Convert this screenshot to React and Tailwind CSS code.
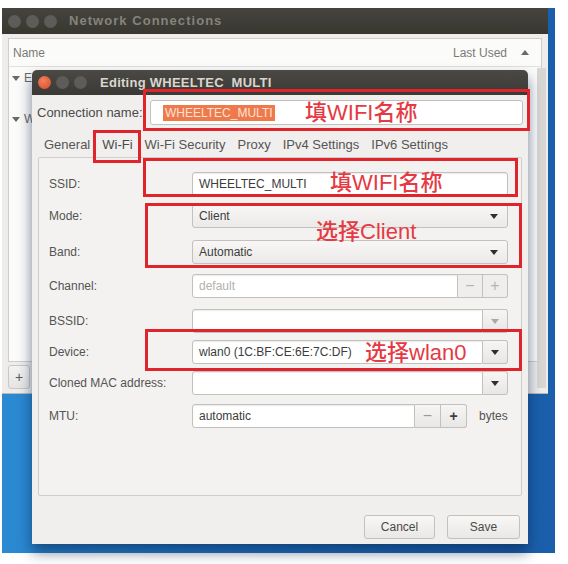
const TriDown = ({ className = "" }) => (
  <svg width="8" height="5" viewBox="0 0 8 5" className={className}>
    <path d="M0 0h8L4 5z" fill="currentColor" />
  </svg>
);

const Entry = ({ children, className = "", disabled }) => (
  <div
    className={`h-full flex items-center px-[6px] border border-[#c2c1bd] bg-white shadow-[inset_0_1px_1px_rgba(0,0,0,0.08)] text-[12px] ${
      disabled ? "text-[#b2b0ab] bg-[#f4f3f2]" : "text-[#3c3c3c]"
    } ${className}`}
  >
    {children}
  </div>
);

const SideButton = ({ children, className = "" }) => (
  <div
    className={`h-full w-[25px] flex items-center justify-center border border-[#c2c1bd] bg-gradient-to-b from-[#f6f5f4] to-[#e8e7e5] text-[#3c3c3c] ${className}`}
  >
    {children}
  </div>
);

const Combo = ({ children }) => (
  <div className="h-full flex-1 flex items-center justify-between px-[6px] pr-[9px] border border-[#c2c1bd] rounded-[3px] bg-gradient-to-b from-[#f8f7f6] to-[#ebeae8] text-[12px] text-[#3c3c3c]">
    <span>{children}</span>
    <TriDown className="text-[#2e2e2e]" />
  </div>
);

const ComboEntry = ({ children, faint }) => (
  <div className="h-full flex-1 flex">
    <Entry className="flex-1 rounded-l-[3px]">{children}</Entry>
    <SideButton className="border-l-0 rounded-r-[3px]">
      <TriDown className={faint ? "text-[#a9a8a4]" : "text-[#2e2e2e]"} />
    </SideButton>
  </div>
);

const Row = ({ label, children, className = "" }) => (
  <div className={`h-[24px] flex items-center ${className}`}>
    <div className="w-[143px] text-[12px] text-[#545452]">{label}</div>
    <div className="flex-1 h-full flex items-center">{children}</div>
  </div>
);

const Dots = ({ first }) => (
  <div className="flex items-center gap-[5px]">
    <span className={`w-[13px] h-[13px] rounded-full ${first}`} />
    <span className="w-[13px] h-[13px] rounded-full bg-[#5d5c58]" />
    <span className="w-[13px] h-[13px] rounded-full bg-[#5d5c58]" />
  </div>
);

const RedBox = ({ className }) => (
  <div className={`absolute border-[3px] border-[#e0242c] ${className}`} />
);

const RedText = ({ className, children }) => (
  <div
    className={`absolute text-[22px] leading-none font-medium text-[#e53a43] font-['Liberation_Sans','Noto_Sans_CJK_SC',sans-serif] ${className}`}
  >
    {children}
  </div>
);

export default function App() {
  return (
    <div className="relative w-[568px] h-[564px] bg-white overflow-hidden font-['Liberation_Sans','Noto_Sans_CJK_SC',sans-serif]">
      {/* desktop */}
      <div className="absolute left-[2px] top-[8px] w-[553px] h-[545px] bg-gradient-to-r from-[#2b8ad2] via-[#2072bf] to-[#1b5eab]">
        {/* Network Connections window */}
        <div className="absolute left-0 top-0 w-[546px] h-[386px] flex flex-col bg-[#eeedec] border-b border-[#b9b8b5]">
          <div className="h-[26px] shrink-0 flex items-center pl-[6px] gap-[12px] bg-gradient-to-b from-[#45443f] to-[#38372f]">
            <Dots first="bg-[#5d5c58]" />
            <span className="text-[13px] font-bold tracking-[0.08em] text-[#86837b]">
              Network Connections
            </span>
          </div>
          <div className="flex-1 flex flex-col px-[6px] pt-[4px] pb-[4px]">
            <div className="flex-1 flex flex-col border border-[#cfcecb] bg-[#fbfbfa]">
              <div className="h-[28px] flex items-center justify-between px-[4px] border-b border-[#e2e1df] text-[12px] text-[#7b7a76]">
                <span>Name</span>
                <span className="flex items-center gap-[14px] pr-[8px]">
                  Last Used
                  <svg width="8" height="5" viewBox="0 0 8 5">
                    <path d="M0 5h8L4 0z" fill="#6a6965" />
                  </svg>
                </span>
              </div>
              <div className="h-[20px] mt-[1px] flex items-center gap-[4px] px-[3px] text-[12px] text-[#6a6965]">
                <TriDown className="text-[#6a6965]" /> E
              </div>
              <div className="h-[20px] mt-[21px] flex items-center gap-[4px] px-[3px] text-[12px] text-[#6a6965]">
                <TriDown className="text-[#6a6965]" /> W
              </div>
            </div>
            <div className="h-[24px] mt-[3px] flex">
              <div className="w-[22px] h-full flex items-center justify-center border border-[#c9c8c4] rounded-[3px] bg-gradient-to-b from-[#f4f3f2] to-[#e6e5e3] text-[14px] text-[#5a5a58]">
                +
              </div>
            </div>
          </div>
          <div className="absolute right-[2px] top-[60px] w-[9px] h-[320px] bg-[#d8d7d4]" />
        </div>

        {/* Editing dialog */}
        <div className="absolute left-[30px] top-[62px] w-[496px] h-[474px] flex flex-col bg-[#f0efee] rounded-t-[5px] shadow-[0_8px_14px_rgba(5,30,70,0.55)]">
          <div className="h-[25px] shrink-0 flex items-center pl-[6px] gap-[13px] rounded-t-[5px] bg-gradient-to-b from-[#4a4944] to-[#3a3935]">
            <Dots first="bg-[radial-gradient(circle_at_40%_35%,#f2805b,#d94a26)]" />
            <span className="text-[13px] font-bold tracking-[0.02em] text-[#d9d6ce]">
              Editing WHEELTEC&nbsp;&nbsp;MULTI
            </span>
          </div>
          <div className="flex-1 flex flex-col px-[5px]">
            <div className="h-[25px] mt-[5px] flex items-center">
              <div className="w-[113px] text-[13px] text-[#4a4a48] whitespace-nowrap">
                Connection name:
              </div>
              <div className="flex-1 h-full flex items-center px-[12px] border border-[#c2c1bd] rounded-[3px] bg-white">
                <span className="px-[2px] bg-[#ee7a4c] text-[12px] leading-[16px] text-[#fbe3d8]">
                  WHEELTEC_MULTI
                </span>
              </div>
            </div>
            <div className="h-[20px] mt-[10px] flex items-center gap-[12px] pl-[7px] text-[13px] text-[#555553]">
              <span>General</span>
              <span className="text-[#4a4a48]">Wi-Fi</span>
              <span>Wi-Fi Security</span>
              <span>Proxy</span>
              <span>IPv4 Settings</span>
              <span>IPv6 Settings</span>
            </div>
            <div className="h-[339px] mt-[2px] mx-[1px] flex flex-col pt-[14px] pl-[10px] pr-[13px] border border-[#cfceca] rounded-[2px] bg-[#f3f2f1]">
              <Row label="SSID:">
                <Entry className="flex-1 rounded-[3px]">WHEELTEC_MULTI</Entry>
              </Row>
              <Row label="Mode:" className="mt-[8px]">
                <Combo>Client</Combo>
              </Row>
              <Row label="Band:" className="mt-[12px]">
                <Combo>Automatic</Combo>
              </Row>
              <Row label="Channel:" className="mt-[10px]">
                <Entry disabled className="flex-1 rounded-l-[3px]">
                  default
                </Entry>
                <SideButton className="border-l-0 bg-none bg-[#efeeed] text-[#b5b4b0]">−</SideButton>
                <SideButton className="border-l-0 rounded-r-[3px] bg-none bg-[#efeeed] text-[#b5b4b0]">+</SideButton>
              </Row>
              <Row label="BSSID:" className="mt-[11px]">
                <ComboEntry faint />
              </Row>
              <Row label="Device:" className="mt-[7px]">
                <ComboEntry>wlan0 (1C:BF:CE:6E:7C:DF)</ComboEntry>
              </Row>
              <Row label="Cloned MAC address:" className="mt-[7px]">
                <ComboEntry />
              </Row>
              <Row label="MTU:" className="mt-[9px]">
                <Entry className="w-[223px] rounded-l-[3px]">automatic</Entry>
                <SideButton className="border-l-0 w-[26px] text-[#9a9995]">−</SideButton>
                <SideButton className="border-l-0 w-[26px] rounded-r-[3px] text-[14px] font-bold">+</SideButton>
                <span className="ml-[12px] text-[12px] text-[#545452]">bytes</span>
              </Row>
            </div>
            <div className="h-[24px] mt-[19px] flex justify-end gap-[12px] pr-[3px]">
              <div className="w-[71px] h-full flex items-center justify-center border border-[#c2c1bd] rounded-[3px] bg-gradient-to-b from-[#f8f7f6] to-[#e9e8e6] text-[12px] text-[#4a4a48]">
                Cancel
              </div>
              <div className="w-[73px] h-full flex items-center justify-center border border-[#c2c1bd] rounded-[3px] bg-gradient-to-b from-[#f8f7f6] to-[#e9e8e6] text-[12px] text-[#4a4a48]">
                Save
              </div>
            </div>
          </div>
        </div>
      </div>

      {/* annotations */}
      <RedBox className="left-[143px] top-[89px] w-[387px] h-[42px]" />
      <RedBox className="left-[93px] top-[130px] w-[48px] h-[33px]" />
      <RedBox className="left-[143px] top-[158px] w-[375px] h-[39px]" />
      <RedBox className="left-[145px] top-[203px] w-[377px] h-[65px]" />
      <RedBox className="left-[145px] top-[329px] w-[377px] h-[42px]" />
      <RedText className="left-[305px] top-[102px]">填WIFI名称</RedText>
      <RedText className="left-[330px] top-[172px]">填WIFI名称</RedText>
      <RedText className="left-[316px] top-[221px]">选择Client</RedText>
      <RedText className="left-[365px] top-[342px]">选择wlan0</RedText>
    </div>
  );
}
